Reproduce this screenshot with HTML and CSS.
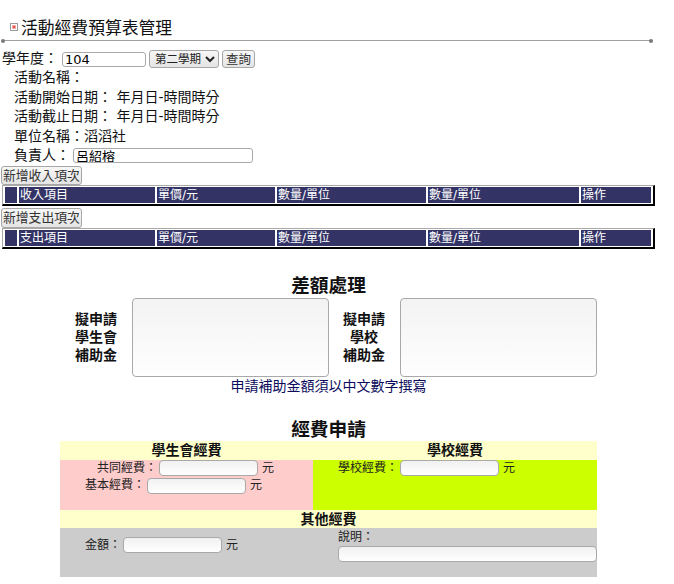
FILE: index.html
```html
<!DOCTYPE html>
<html lang="zh-Hant">
<head>
    <meta charset="utf-8">
    <title>活動經費預算表管理</title>
    <link rel="stylesheet" href="styles.css">
</head>
<body>
    <div class="title">
        <svg class="title-icon" width="8" height="8" viewBox="0 0 8 8">
            <rect x="0.5" y="0.5" width="7" height="7" fill="#fff" stroke="#9a9a9a"/>
            <rect x="2" y="2" width="4" height="4" fill="#f2a7a0"/>
            <rect x="3" y="3" width="2" height="2" fill="#e0524a"/>
        </svg>
        <span>活動經費預算表管理</span>
    </div>
    <div class="rule"></div>

    <div class="query">
        <span>學年度：</span>
        <input class="field year" type="text" value="104">
        <select class="term">
            <option>第二學期</option>
        </select>
        <button class="btn">查詢</button>
    </div>

    <div class="info">
        <div>活動名稱：</div>
        <div>活動開始日期： 年月日-時間時分</div>
        <div>活動截止日期： 年月日-時間時分</div>
        <div>單位名稱：滔滔社</div>
        <div class="owner-row">負責人：<input class="field owner" type="text" value="呂紹榕"></div>
    </div>

    <button class="btn btn-add">新增收入項次</button>
    <table class="items">
        <tr>
            <th></th>
            <th>收入項目</th>
            <th>單價/元</th>
            <th>數量/單位</th>
            <th>數量/單位</th>
            <th>操作</th>
        </tr>
    </table>

    <button class="btn btn-add btn-add2">新增支出項次</button>
    <table class="items">
        <tr>
            <th></th>
            <th>支出項目</th>
            <th>單價/元</th>
            <th>數量/單位</th>
            <th>數量/單位</th>
            <th>操作</th>
        </tr>
    </table>

    <h3 class="section-title">差額處理</h3>
    <div class="diff">
        <div class="diff-label">擬申請<br>學生會<br>補助金</div>
        <textarea class="diff-box"></textarea>
        <div class="diff-label diff-label2">擬申請<br>學校<br>補助金</div>
        <textarea class="diff-box"></textarea>
    </div>
    <div class="note">申請補助金額須以中文數字撰寫</div>

    <h3 class="section-title section-title2">經費申請</h3>
    <div class="budget">
        <div class="b-head">學生會經費</div>
        <div class="b-head">學校經費</div>

        <div class="b-cell b-pink">
            <div class="b-line">　共同經費：<input class="field money" type="text"><span class="unit">元</span></div>
            <div class="b-line">基本經費：<input class="field money" type="text"><span class="unit">元</span></div>
        </div>
        <div class="b-cell b-green">
            <div class="b-line">學校經費：<input class="field money" type="text"><span class="unit">元</span></div>
        </div>

        <div class="b-head b-wide">其他經費</div>

        <div class="b-cell b-gray b-amount">
            <div class="b-line">金額：<input class="field money" type="text"><span class="unit">元</span></div>
        </div>
        <div class="b-cell b-gray b-desc">
            <div class="b-line">說明：</div>
            <input class="field desc" type="text">
        </div>
    </div>
</body>
</html>
```

FILE: styles.css
```css
html {
    box-sizing: border-box;
}

*,
*:before,
*:after {
    box-sizing: inherit;
}

body {
    margin: 0;
    font-family: "DejaVu Sans", "Noto Sans CJK TC", sans-serif;
    font-size: 14px;
    line-height: 19.5px;
    color: #111;
    background: #fff;
}

input,
select,
button,
textarea {
    font-family: "DejaVu Sans", "Noto Sans CJK TC", sans-serif;
    margin: 0;
}

.title {
    display: flex;
    align-items: center;
    gap: 3px;
    padding: 17px 0 0 10px;
    font-family: "Noto Sans CJK TC", sans-serif;
    font-size: 16.8px;
    line-height: 20px;
}

.rule {
    position: relative;
    width: 648px;
    height: 1px;
    margin: 3px 0 0 3px;
    background: #a0a0a0;
}

.rule:before,
.rule:after {
    content: "";
    position: absolute;
    top: -1.5px;
    width: 4px;
    height: 4px;
    border-radius: 50%;
    background: #7a7a7a;
}

.rule:before {
    left: -2px;
}

.rule:after {
    right: -2px;
}

.query {
    display: flex;
    align-items: center;
    height: 18px;
    margin-top: 9px;
    padding-left: 2px;
}

.field {
    height: 15px;
    padding: 0 2px;
    border: 1px solid #a9a9a9;
    border-radius: 3px;
    background: #fff;
    font-size: 13px;
    color: #000;
}

.year {
    width: 84px;
    margin-left: 4px;
}

.term {
    width: 70px;
    height: 18px;
    margin-left: 3px;
    padding: 0 0 0 1px;
    border: 1px solid #a6a6a6;
    border-radius: 3px;
    background: linear-gradient(#f7f7f7, #e4e4e4);
    font-size: 11.5px;
    color: #222;
}

.btn {
    height: 18px;
    margin-left: 3px;
    padding: 0 3px;
    border: 1px solid #a6a6a6;
    border-radius: 3px;
    background: linear-gradient(#f7f7f7, #e4e4e4);
    font-size: 12.5px;
    line-height: 15px;
    color: #333;
}

.info {
    padding-left: 14px;
}

.owner-row {
    display: flex;
    align-items: center;
}

.owner {
    width: 180px;
    margin-left: 3px;
}

.btn-add {
    display: block;
    height: 19px;
    margin-left: 1px;
    padding: 0 1px;
    font-size: 12.8px;
}

.btn-add2 {
    height: 20px;
    margin-top: 2px;
}

.items {
    width: 653px;
    margin-left: 2px;
    table-layout: fixed;
    border-collapse: separate;
    border-spacing: 2px 1px;
    border-top: 1px solid #a8a8a8;
    border-left: 1px solid #a8a8a8;
    border-bottom: 2px solid #000;
    border-right: 2px solid #000;
}

.items th {
    height: 16px;
    padding: 0 0 0 1px;
    background: #333366;
    color: #fff;
    font-weight: normal;
    font-size: 12px;
    line-height: 16px;
    text-align: left;
}

.items th:nth-child(1) { width: 12px; }
.items th:nth-child(2) { width: 136px; }
.items th:nth-child(3) { width: 118px; }
.items th:nth-child(4) { width: 149px; }
.items th:nth-child(5) { width: 151px; }
.items th:nth-child(6) { width: 70px; }

.section-title {
    width: 537px;
    margin: 23px 0 0 60px;
    font-family: "Noto Sans CJK TC", sans-serif;
    font-size: 18.7px;
    line-height: 24px;
    text-align: center;
}

.section-title2 {
    margin-top: 20px;
}

.diff {
    display: flex;
    align-items: center;
    margin: 2px 0 0 75px;
}

.diff-label {
    width: 42px;
    font-weight: bold;
    font-size: 14px;
    line-height: 18px;
    text-align: center;
}

.diff-label2 {
    margin-left: 14px;
}

.diff-box {
    width: 197px;
    height: 79px;
    margin-left: 15px;
    border: 1px solid #a9a9a9;
    border-radius: 4px;
    background: linear-gradient(#f3f3f3, #fefefe);
    resize: none;
}

.note {
    width: 537px;
    margin-left: 60px;
    color: #0b0b5c;
    line-height: 19px;
    text-align: center;
}

.budget {
    display: grid;
    grid-template-columns: 253px 284px;
    grid-template-rows: 19px 50px 18px 49px;
    width: 537px;
    margin: 1px 0 0 60px;
    font-size: 12px;
    color: #222;
}

.b-head {
    background: #ffffcc;
    font-weight: bold;
    font-size: 14px;
    line-height: 19px;
    text-align: center;
    color: #111;
}

.b-wide {
    grid-column: 1 / 3;
    line-height: 18px;
}

.b-cell {
    padding: 0 0 0 25px;
}

.b-pink {
    background: #ffcccc;
}

.b-green {
    background: #ccff00;
}

.b-gray {
    background: #cccccc;
}

.b-line {
    display: flex;
    align-items: center;
    height: 17.5px;
    line-height: 17px;
}

.money {
    width: 99px;
    height: 16px;
    margin-left: 2px;
    border-radius: 4px;
    background: linear-gradient(#f1f1f1, #fff);
}

.unit {
    margin-left: 4px;
}

.b-amount {
    padding-top: 9px;
}

.b-desc {
    padding-top: 1px;
}

.desc {
    display: block;
    width: 259px;
    height: 16px;
    border-radius: 4px;
    background: linear-gradient(#f1f1f1, #fff);
}
```
